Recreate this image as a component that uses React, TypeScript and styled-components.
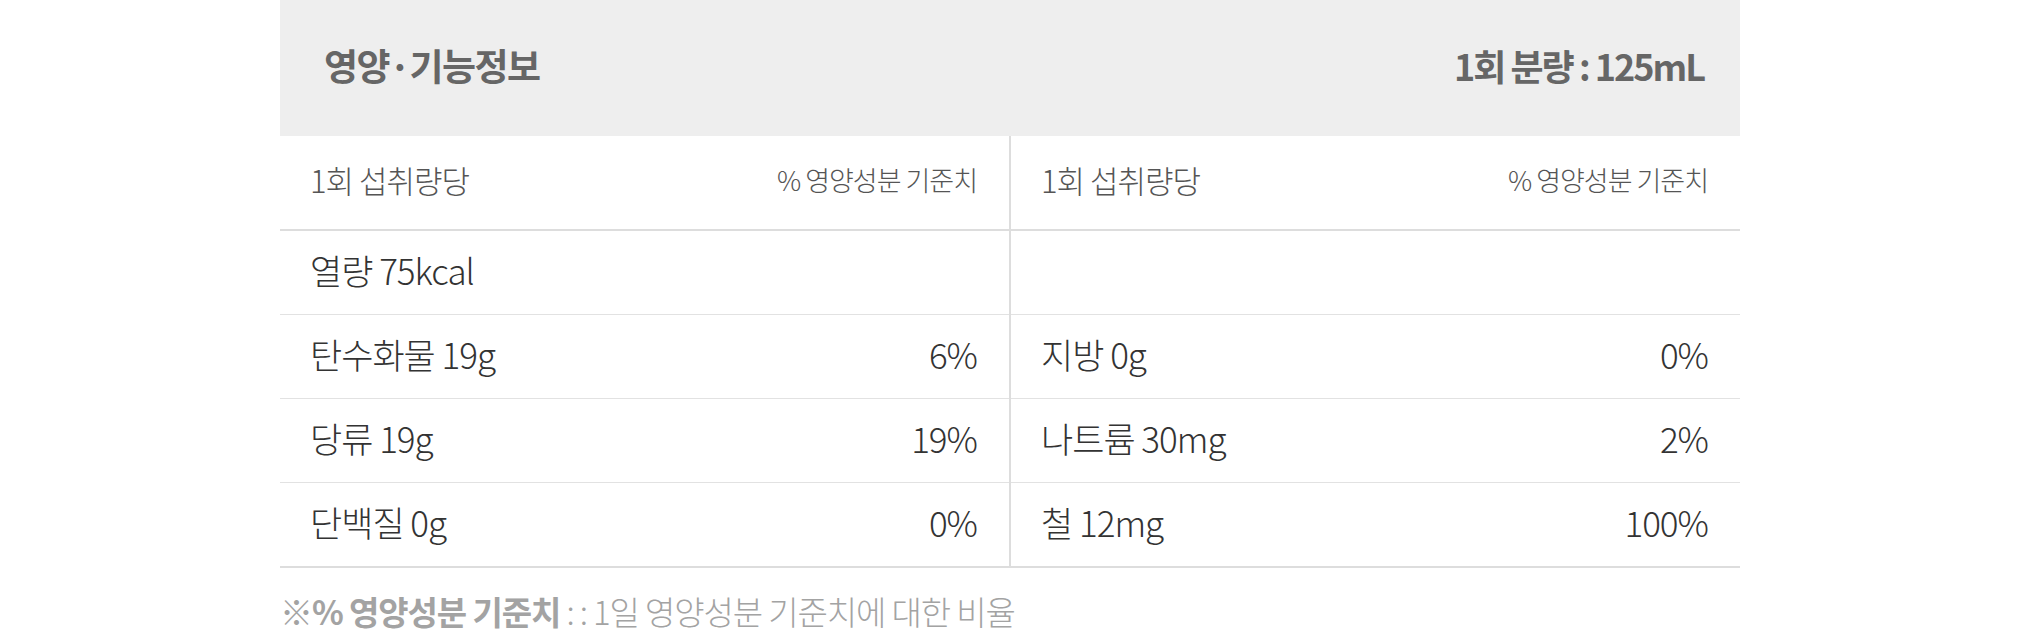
import React from "react";
import styled, { createGlobalStyle } from "styled-components";

const GlobalStyle = createGlobalStyle`
  html, body {
    margin: 0;
    padding: 0;
    background: #ffffff;
  }
  body {
    font-family: "Noto Sans CJK KR", "Noto Sans", sans-serif;
    color: #333;
  }
  * { box-sizing: border-box; }
`;

const Wrapper = styled.div`
  width: 1460px;
  margin: 0 auto;
`;

const HeaderBar = styled.div`
  height: 136px;
  background: #eeeeee;
  display: flex;
  align-items: center;
  justify-content: space-between;
  padding: 0 36px 7px 44px;
  color: #666;
  font-weight: 700;
`;

const HeaderTitle = styled.h2`
  margin: 0;
  font-size: 37px;
  font-weight: inherit;
  letter-spacing: -1.5px;
`;

const HeaderServing = styled.span`
  font-size: 36px;
  letter-spacing: -2px;
`;

const Columns = styled.div`
  display: grid;
  grid-template-columns: 731px 729px;
  border-bottom: 2px solid #dddddd;
`;

const Column = styled.div<{ $divider?: boolean }>`
  display: flex;
  flex-direction: column;
  border-right: ${(p) => (p.$divider ? "2px solid #dddddd" : "none")};
`;

const HeadRow = styled.div`
  height: 95px;
  display: flex;
  align-items: center;
  justify-content: space-between;
  padding: 0 32px 6px 30px;
  border-bottom: 2px solid #dddddd;
  color: #555;
  font-weight: 300;
  letter-spacing: -1px;
`;

const HeadLabel = styled.span`
  font-size: 31px;
`;

const HeadNote = styled.span`
  font-size: 27px;
`;

const Row = styled.div<{ $last?: boolean }>`
  height: ${(p) => (p.$last ? "83px" : "84px")};
  display: flex;
  align-items: center;
  justify-content: space-between;
  padding: 0 32px 6px 30px;
  border-bottom: ${(p) => (p.$last ? "none" : "1px solid #e2e2e2")};
  font-weight: 300;
  font-size: 35px;
  letter-spacing: -1px;
  color: #333;
`;

const Name = styled.span``;
const Value = styled.span``;

const Footnote = styled.p`
  margin: 0;
  padding-top: 20px;
  font-size: 33px;
  line-height: 46px;
  letter-spacing: -1.1px;
  color: #a3a3a3;
  font-weight: 300;
`;

const Strong = styled.strong`
  font-weight: 700;
`;

type Item = { name: string; value?: string };

const left: Item[] = [
  { name: "열량 75kcal" },
  { name: "탄수화물 19g", value: "6%" },
  { name: "당류 19g", value: "19%" },
  { name: "단백질 0g", value: "0%" },
];

const right: Item[] = [
  { name: "" },
  { name: "지방 0g", value: "0%" },
  { name: "나트륨 30mg", value: "2%" },
  { name: "철 12mg", value: "100%" },
];

const NutritionColumn: React.FC<{ items: Item[]; divider?: boolean }> = ({ items, divider }) => (
  <Column $divider={divider}>
    <HeadRow>
      <HeadLabel>1회 섭취량당</HeadLabel>
      <HeadNote>% 영양성분 기준치</HeadNote>
    </HeadRow>
    {items.map((it, i) => (
      <Row key={i} $last={i === items.length - 1}>
        <Name>{it.name}</Name>
        {it.value && <Value>{it.value}</Value>}
      </Row>
    ))}
  </Column>
);

export default function App() {
  return (
    <>
      <GlobalStyle />
      <Wrapper>
        <HeaderBar>
          <HeaderTitle>영양·기능정보</HeaderTitle>
          <HeaderServing>1회 분량 : 125mL</HeaderServing>
        </HeaderBar>
        <Columns>
          <NutritionColumn items={left} divider />
          <NutritionColumn items={right} />
        </Columns>
        <Footnote>
          <Strong>※% 영양성분 기준치</Strong> : : 1일 영양성분 기준치에 대한 비율
        </Footnote>
      </Wrapper>
    </>
  );
}
